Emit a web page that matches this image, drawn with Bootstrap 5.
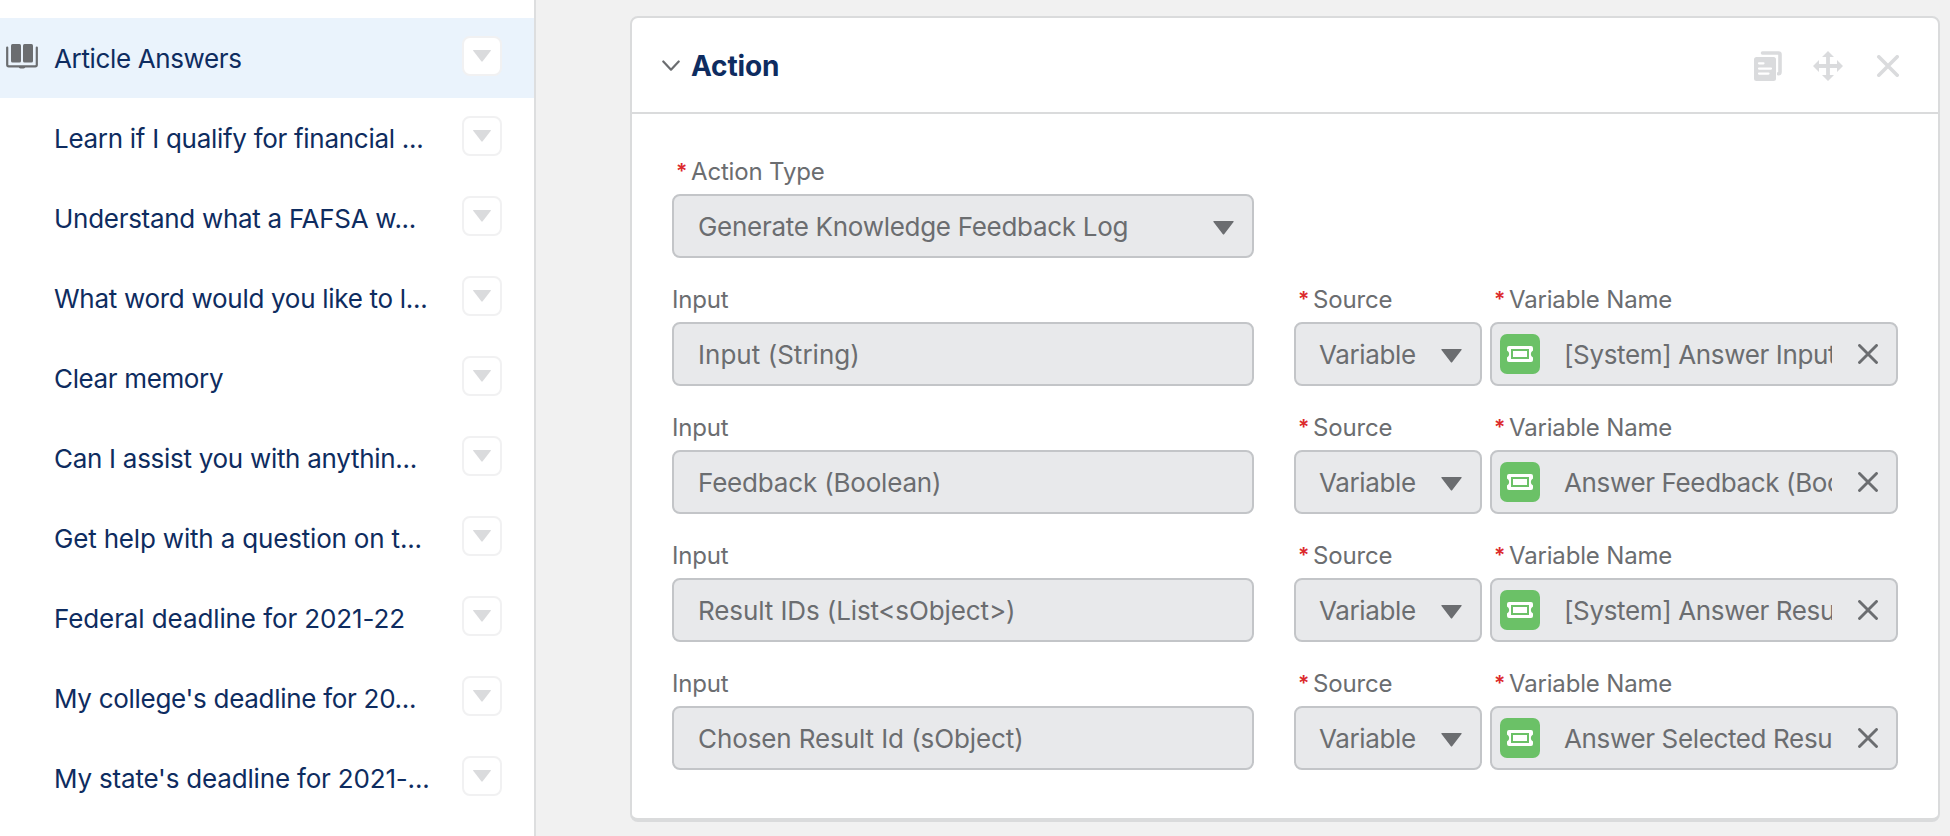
<!DOCTYPE html>
<html lang="en">
<head>
<meta charset="utf-8">
<meta name="viewport" content="width=device-width, initial-scale=1">
<title>Article Answers</title>
<link href="https://cdn.jsdelivr.net/npm/bootstrap@5.3.0/dist/css/bootstrap.min.css" rel="stylesheet">
<style>
  body { font-family: Inter, "Liberation Sans", sans-serif; font-size: 26px; line-height: 40px; letter-spacing: -.29px; background: #f1f1f1; color: #6b6d70; }
  .sidebar { width: 536px; border-right: 2px solid #dddedf; padding-top: 18px; }
  .dialog-item { height: 80px; padding: 0 32px 0 6px; color: #0e2c60; }
  .dialog-item.active-item { background: #eaf3fc; }
  .item-icon { width: 48px; height: 28px; margin-top: -3px; }
  .item-text { padding-top: 2px; }
  .menu-btn { width: 40px; height: 40px; margin-top: -4px; border: 2px solid #f1f1f2; border-radius: 8px; background: #fff; }
  .ls-tight { letter-spacing: -.36px; }
  .ls-wide { letter-spacing: -.18px; }
  .ls-none { letter-spacing: -.1px; }
  .ls-plus { letter-spacing: .03px; }
  .stage { padding: 16px 10px 0 94px; }
  .action-card { height: 806px; border: 2px solid #dadbdc; border-bottom-width: 4px; border-radius: 8px; background: #fff; }
  .action-head { height: 96px; border-bottom: 2px solid #dadbdc; padding: 2px 39px 0 30px; }
  .action-title { font-size: 28px; font-weight: 700; letter-spacing: -.15px; color: #0e2c60; margin-left: 11px; padding-top: 2px; }
  .head-icons { gap: 31px; }
  .action-body { padding: 38px 40px 0; }
  .form-grid { display: grid; grid-template-columns: 582px 24px 188px 408px; column-gap: 8px; }
  .form-line { height: 128px; }
  .field-label { height: 42px; line-height: 40px; font-size: 24px; letter-spacing: -.17px; white-space: nowrap; }
  .req { color: #dc2a2c; display: inline-block; width: 15px; margin-left: 4px; font-size: 21px; font-weight: 600; line-height: 20px; letter-spacing: 0; vertical-align: 1px; }
  .field-box { height: 64px; border: 2px solid #c3c5c8; border-radius: 8px; background: #e8e9eb; padding: 2px 18px 0 24px; white-space: nowrap; }
  .src-box { padding-left: 23px; }
  .tri-icon { margin-top: 1px; }
  .lookup-box { padding: 0 18px 0 8px; }
  .lookup-text { width: 268px; margin-left: 24px; padding-top: 2px; }
  .var-icon { width: 40px; height: 40px; border-radius: 7px; background: #6bc167; }
</style>
<script src="https://cdn.jsdelivr.net/npm/bootstrap@5.3.0/dist/js/bootstrap.bundle.min.js"></script>
</head>
<body class="vh-100 overflow-hidden">
<svg class="d-none">
  <symbol id="tri-sm" viewBox="0 0 18 12"><path d="M.6 0h16.8q.9 0 .4.8L9.7 11.3q-.7.8-1.4 0L.2.8Q-.3 0 .6 0z" fill="#dadbdd"/></symbol>
  <symbol id="tri" viewBox="0 0 21 14"><path d="M1 0h19q1.300 0 .5 1l-9.200 12q-.8 1-1.600 0L.5 1Q-.3 0 1 0z" fill="#6b6d70"/></symbol>
  <symbol id="cross" viewBox="0 0 20 20"><path d="M1.500 1.500l17 17M18.500 1.500l-17 17" stroke="#6b6d70" stroke-width="2.900" stroke-linecap="round"/></symbol>
  <symbol id="ticket" viewBox="0 0 40 40"><path d="M9 12h22q2 0 2 2v2.500q-2.200 1-2.200 3.500t2.200 3.500V26q0 2-2 2H9q-2 0-2-2v-2.500q2.200-1 2.200-3.500T7 16.500V14q0-2 2-2z" fill="#fff"/><path d="M12 16h16v8H12z" fill="#fff" stroke="#6bc167" stroke-width="2"/></symbol>
</svg>
<div class="d-flex h-100">
  <nav class="sidebar bg-white flex-shrink-0 h-100 overflow-hidden">
    <div class="dialog-item active-item d-flex align-items-center">
      <svg class="item-icon flex-shrink-0" viewBox="0 0 48 28"><g fill="#6b6d70"><rect x="5" y="1" width="10" height="18.500" rx="1.500"/><rect x="17" y="1" width="10" height="18.500" rx="1.500"/><path d="M1.200 4.500v17.300q0 1.500 1.500 1.500h26.600q1.500 0 1.500-1.500V4.500" fill="none" stroke="#6b6d70" stroke-width="2.200" stroke-linecap="round"/><path d="M12.500 23h7q-.3 2.600-2 2.600h-3q-1.700 0-2-2.600z"/></g></svg>
      <span class="item-text ls-tight flex-grow-1">Article Answers</span>
      <button class="menu-btn d-flex align-items-center justify-content-center p-0"><svg width="18" height="12"><use href="#tri-sm"/></svg></button>
    </div>
    <div id="dialogs"></div>
  </nav>
  <main class="stage flex-grow-1">
    <section class="action-card">
      <header class="action-head d-flex align-items-center">
        <svg width="18" height="12" viewBox="0 0 18 12" fill="none"><path d="M1.300 1.500L9 9.700l7.700-8.200" stroke="#6b6d70" stroke-width="2.200" stroke-linecap="round" stroke-linejoin="round"/></svg>
        <h2 class="action-title mb-0 flex-grow-1">Action</h2>
        <div class="head-icons d-flex align-items-center">
          <svg width="28" height="30" viewBox="0 0 28 30"><path d="M8.500 2h16q1.500 0 1.500 1.500V21q0 1.700-1.700 1.700" fill="none" stroke="#dadbdd" stroke-width="3.600" stroke-linecap="round"/><rect x="-1" y="5" width="24" height="26" fill="#fff"/><rect x="0" y="6" width="22" height="24" rx="2.500" fill="#dadbdd"/><path d="M5 12.300h4.500M5 17.600h12M5 22.600h9.500" stroke="#fff" stroke-width="2.200" stroke-linecap="round"/></svg>
          <svg width="30" height="30" viewBox="0 0 30 30"><path d="M15 4v22M4 15h22" stroke="#dadbdd" stroke-width="3.800"/><path d="M15 0l6 6H9zM15 30l6-6H9zM0 15l6-6v12zM30 15l-6-6v12z" fill="#dadbdd"/></svg>
          <svg width="25" height="22" viewBox="-3 0 25 22"><path d="M1.800 1.800l18.400 18.400M20.200 1.800L1.800 20.200" stroke="#dadbdd" stroke-width="3.600" stroke-linecap="round"/></svg>
        </div>
      </header>
      <div class="action-body">
        <div class="form-grid form-line">
          <div>
            <div class="field-label"><span class="req">*</span>Action Type</div>
            <div class="field-box d-flex align-items-center justify-content-between"><span>Generate Knowledge Feedback Log</span><svg class="tri-icon" width="21" height="14"><use href="#tri"/></svg></div>
          </div>
        </div>
        <div id="inputs"></div>
      </div>
    </section>
  </main>
</div>
<script>
  const dialogs = [
    ['Learn if I qualify for financial ...', ''], ['Understand what a FAFSA w...', ''], ['What word would you like to l...', ''],
    ['Clear memory', 'ls-tight'], ['Can I assist you with anythin...', ''], ['Get help with a question on t...', 'ls-wide'],
    ['Federal deadline for 2021-22', 'ls-none'], ["My college's deadline for 20...", ''], ["My state's deadline for 2021-...", 'ls-wide']
  ];
  document.getElementById('dialogs').innerHTML = dialogs.map(([text, cls]) => `
    <div class="dialog-item d-flex align-items-center">
      <span class="item-icon flex-shrink-0"></span>
      <span class="item-text flex-grow-1 ${cls}">${text}</span>
      <button class="menu-btn d-flex align-items-center justify-content-center p-0"><svg width="18" height="12"><use href="#tri-sm"/></svg></button>
    </div>`).join('');

  const inputs = [
    ['Input (String)', 'ls-plus', '[System] Answer Input'], ['Feedback (Boolean)', 'ls-wide', 'Answer Feedback (Boo'],
    ['Result IDs (List&lt;sObject&gt;)', 'ls-none', '[System] Answer Resu'], ['Chosen Result Id (sObject)', 'ls-none', 'Answer Selected Resu']
  ];
  document.getElementById('inputs').innerHTML = inputs.map(([name, cls, variable]) => `
    <div class="form-grid form-line">
      <div>
        <div class="field-label ls-plus">Input</div>
        <div class="field-box d-flex align-items-center"><span class="${cls}">${name}</span></div>
      </div>
      <div></div>
      <div>
        <div class="field-label"><span class="req">*</span>Source</div>
        <div class="field-box src-box d-flex align-items-center justify-content-between"><span class="ls-tight">Variable</span><svg class="tri-icon" width="21" height="14"><use href="#tri"/></svg></div>
      </div>
      <div>
        <div class="field-label"><span class="req">*</span>Variable Name</div>
        <div class="field-box lookup-box d-flex align-items-center">
          <svg class="var-icon flex-shrink-0"><use href="#ticket"/></svg>
          <span class="lookup-text ls-tight overflow-hidden flex-shrink-0">${variable}</span>
          <svg class="ms-auto" width="20" height="20"><use href="#cross"/></svg>
        </div>
      </div>
    </div>`).join('');
</script>
</body>
</html>
